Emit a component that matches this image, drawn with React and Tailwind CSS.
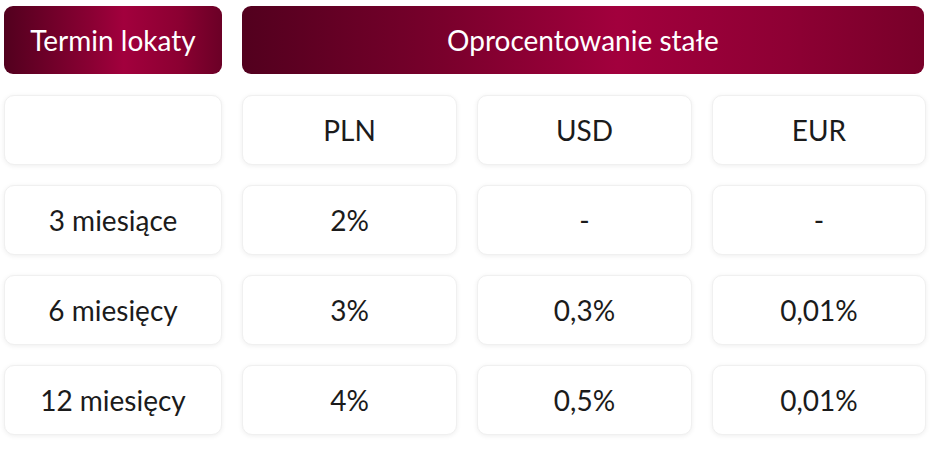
const rows = [
  ["3 miesiące", "2%", "-", "-"],
  ["6 miesięcy", "3%", "0,3%", "0,01%"],
  ["12 miesięcy", "4%", "0,5%", "0,01%"],
];

function Cell({ children }) {
  return (
    <div className="h-[70px] flex items-center justify-center rounded-[10px] bg-white border border-[#f0f0f0] shadow-[0_1px_5px_rgba(0,0,0,0.07)] text-[28px] text-[#1b1b1b]">
      {children}
    </div>
  );
}

export default function App() {
  return (
    <div className="w-[930px] h-[450px] bg-white pt-[6px] pl-[4px] font-['Lato','Liberation_Sans',sans-serif]">
      <div className="grid grid-cols-[218px_215px_215px_214px] gap-x-[20px] gap-y-[20px]">
        <div className="h-[68px] mb-[1px] flex items-center justify-center rounded-[9px] bg-[linear-gradient(90deg,#52001e_0%,#8a0033_40%,#a2003d_55%,#8c0032_80%,#6b0026_100%)] text-white text-[28px]">
          Termin lokaty
        </div>
        <div className="col-span-3 mr-[2px] h-[68px] flex items-center justify-center rounded-[9px] bg-[linear-gradient(90deg,#52001e_0%,#7a002c_30%,#a2003d_55%,#8e0034_80%,#780029_100%)] text-white text-[28px]">
          Oprocentowanie stałe
        </div>
        <Cell />
        <Cell>PLN</Cell>
        <Cell>USD</Cell>
        <Cell>EUR</Cell>
        {rows.map((r) =>
          r.map((v, i) => <Cell key={r[0] + i}>{v}</Cell>)
        )}
      </div>
    </div>
  );
}
